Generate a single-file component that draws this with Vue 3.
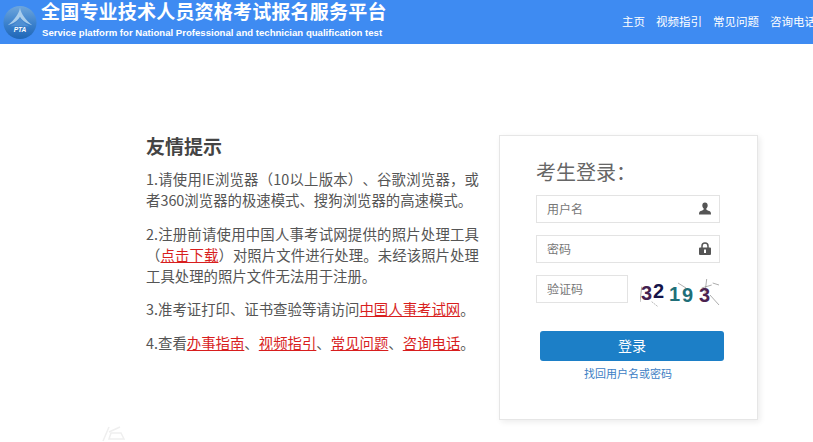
<script setup>
const navItems = ['主页', '视频指引', '常见问题', '咨询电话']
</script>

<template>
  <div class="page">
    <header class="topbar">
      <div class="brand">
        <svg class="logo" width="34" height="35" viewBox="0 0 36 36">
          <defs>
            <linearGradient id="orb" x1="0" y1="0" x2="0" y2="1">
              <stop offset="0" stop-color="#6ea6dc" />
              <stop offset="0.55" stop-color="#3a80cc" />
              <stop offset="1" stop-color="#1f66b6" />
            </linearGradient>
          </defs>
          <circle cx="18" cy="18" r="17.5" fill="url(#orb)" />
          <path d="M18 2 C17 9 12 15 5 21 C11 19 15 17 18 12 C21 17 25 19 31 21 C24 15 19 9 18 2Z" fill="#a9cdec" />
          <path d="M18 13 C15 18 11 20 8 22 L28 22 C25 20 21 18 18 13Z" fill="#4f8fd3" />
          <text x="18" y="28.5" text-anchor="middle" class="logo-text">PTA</text>
        </svg>
        <div class="brand-text">
          <div class="brand-title">全国专业技术人员资格考试报名服务平台</div>
          <div class="brand-sub">Service platform for National Professional and technician qualification test</div>
        </div>
      </div>
      <nav class="nav">
        <a v-for="item in navItems" :key="item" class="nav-item">{{ item }}</a>
      </nav>
    </header>

    <main class="content">
      <section class="tips">
        <h2 class="tips-title">友情提示</h2>
        <p>1.请使用IE浏览器（10以上版本）、谷歌浏览器，或者360浏览器的极速模式、搜狗浏览器的高速模式。</p>
        <p>2.注册前请使用中国人事考试网提供的照片处理工具（<a class="red">点击下载</a>）对照片文件进行处理。未经该照片处理工具处理的照片文件无法用于注册。</p>
        <p>3.准考证打印、证书查验等请访问<a class="red">中国人事考试网</a>。</p>
        <p>4.查看<a class="red">办事指南</a>、<a class="red">视频指引</a>、<a class="red">常见问题</a>、<a class="red">咨询电话</a>。</p>
      </section>

      <section class="card">
        <h3 class="card-title">考生登录：</h3>
        <div class="field">
          <input class="input" placeholder="用户名" />
          <svg class="field-icon" width="12" height="13" viewBox="0 0 12 13">
            <path d="M6 0.5C4.3 0.5 3.3 1.8 3.3 3.4C3.3 4.8 4 5.9 4.7 6.5C4.8 7.3 4.6 7.8 3.6 8.3C2.4 8.9 0.8 9.2 0.3 10.2C0.1 10.7 0 11.5 0 12.5H12C12 11.5 11.9 10.7 11.7 10.2C11.2 9.2 9.6 8.9 8.4 8.3C7.4 7.8 7.2 7.3 7.3 6.5C8 5.9 8.7 4.8 8.7 3.4C8.7 1.8 7.7 0.5 6 0.5Z" fill="#555" />
          </svg>
        </div>
        <div class="field">
          <input class="input" placeholder="密码" />
          <svg class="field-icon" width="12" height="13" viewBox="0 0 12 13">
            <path d="M3 6V4a3 3 0 0 1 6 0v2" fill="none" stroke="#555" stroke-width="1.5" />
            <path d="M1 5.5H11a1 1 0 0 1 1 1V12a1 1 0 0 1-1 1H1a1 1 0 0 1-1-1V6.5a1 1 0 0 1 1-1Z" fill="#555" />
            <rect x="5" y="7.5" width="2" height="3.5" fill="#fff" />
          </svg>
        </div>
        <div class="captcha-row">
          <input class="input captcha-input" placeholder="验证码" />
          <svg class="captcha" width="82" height="40" viewBox="0 0 82 40">
            <g stroke="#777" stroke-width="0.6" fill="none">
              <path d="M1.7 17.7 L0 33" />
              <path d="M11.7 32.7 L18 37.7" stroke-dasharray="1.5 1" />
              <path d="M38 14 L46 19" />
              <path d="M66.7 10 L65 24" />
              <path d="M61.7 19 L71.7 16" />
              <path d="M72.7 14 L79 16" />
              <path d="M70 26 L79 36" />
            </g>
            <text x="1" y="31" class="digit" fill="#43204f">3</text>
            <text x="13" y="29" class="digit" fill="#14144a">2</text>
            <text x="29" y="32" class="digit" fill="#1f6f78">1</text>
            <text x="42" y="33" class="digit" fill="#1f6f78">9</text>
            <text x="59" y="33" class="digit" fill="#4b2350">3</text>
          </svg>
        </div>
        <button class="submit" type="button">登录</button>
        <a class="recover">找回用户名或密码</a>
      </section>
    </main>

    <svg class="watermark" width="26" height="18" viewBox="0 0 26 18">
      <g fill="none" stroke="#efefef" stroke-width="1.5">
        <path d="M3 17 L9 3" />
        <path d="M9 8 L20 3" />
        <path d="M11 9 H21 L24 15 H9 Z" />
      </g>
    </svg>
  </div>
</template>

<style scoped>
.page {
  position: relative;
  width: 813px;
  height: 442px;
  overflow: hidden;
  background: #fff;
  font-family: "Noto Sans CJK SC", "Liberation Sans", sans-serif;
  color: #555;
  text-spacing-trim: space-all;
}
.topbar {
  display: flex;
  height: 44px;
  background: #3e8bf2;
  color: #fff;
}
.brand {
  display: flex;
  flex: none;
  width: 622px;
  padding-left: 3px;
  box-sizing: border-box;
}
.logo {
  flex: none;
  margin-top: 5px;
}
.logo-text {
  font: italic 700 7px "Liberation Sans", sans-serif;
  fill: #fff;
}
.brand-text {
  margin-left: 4px;
}
.brand-title {
  font-size: 19px;
  line-height: 22px;
  font-weight: 700;
  letter-spacing: 0.2px;
  white-space: nowrap;
}
.brand-sub {
  margin-top: 4px;
  padding-left: 1px;
  font: 700 9.6px/14px "Liberation Sans", sans-serif;
  white-space: nowrap;
}
.nav {
  display: flex;
  flex: none;
  gap: 11px;
  font-size: 11.5px;
  line-height: 43px;
  white-space: nowrap;
}
.content {
  display: flex;
  align-items: flex-start;
  padding: 91px 0 0 146px;
}
.tips {
  flex: none;
  width: 333px;
  font-size: 14.4px;
  line-height: 21px;
  text-align: justify;
}
.tips p {
  margin: 0 0 12.7px;
}
.tips-title {
  margin: 0 0 11px;
  font-size: 19px;
  line-height: 22px;
  font-weight: 700;
  color: #444;
}
.red {
  color: #d81e1e;
  text-decoration: underline;
}
.card {
  flex: none;
  display: flex;
  flex-direction: column;
  box-sizing: border-box;
  width: 259px;
  height: 285px;
  margin-left: 20px;
  padding: 22px 36px 0;
  border: 1px solid #e6e6e6;
  box-shadow: 2px 2px 6px rgba(0, 0, 0, 0.08);
}
.card-title {
  margin: 0 0 9px;
  font-size: 20px;
  line-height: 28px;
  font-weight: 400;
  color: #666;
}
.field {
  position: relative;
  width: 184px;
  margin-bottom: 12px;
}
.input {
  display: block;
  box-sizing: border-box;
  width: 100%;
  height: 28px;
  padding: 0 10px 2px;
  border: 1px solid #e3e3e3;
  outline: none;
  font: 12px "Noto Sans CJK SC", sans-serif;
}
.input::placeholder {
  color: #777;
  opacity: 1;
}
.field-icon {
  position: absolute;
  right: 9px;
  top: 7px;
}
.captcha-row {
  display: flex;
  align-items: center;
  height: 28px;
}
.captcha-input {
  width: 92px;
}
.captcha {
  flex: none;
  margin-left: 12px;
}
.digit {
  font: 700 20px "Liberation Sans", sans-serif;
}
.submit {
  display: block;
  flex: none;
  width: 184px;
  height: 30px;
  margin: 28px 0 0 4px;
  padding: 0 0 2px;
  border: 0;
  border-radius: 3px;
  background: #1c7fc7;
  color: #fff;
  font: 14px "Noto Sans CJK SC", sans-serif;
}
.recover {
  margin: 5px 0 0;
  width: 184px;
  text-align: center;
  font-size: 11px;
  line-height: 14px;
  color: #3c80c4;
}
.watermark {
  position: absolute;
  left: 100px;
  top: 424px;
}
</style>
